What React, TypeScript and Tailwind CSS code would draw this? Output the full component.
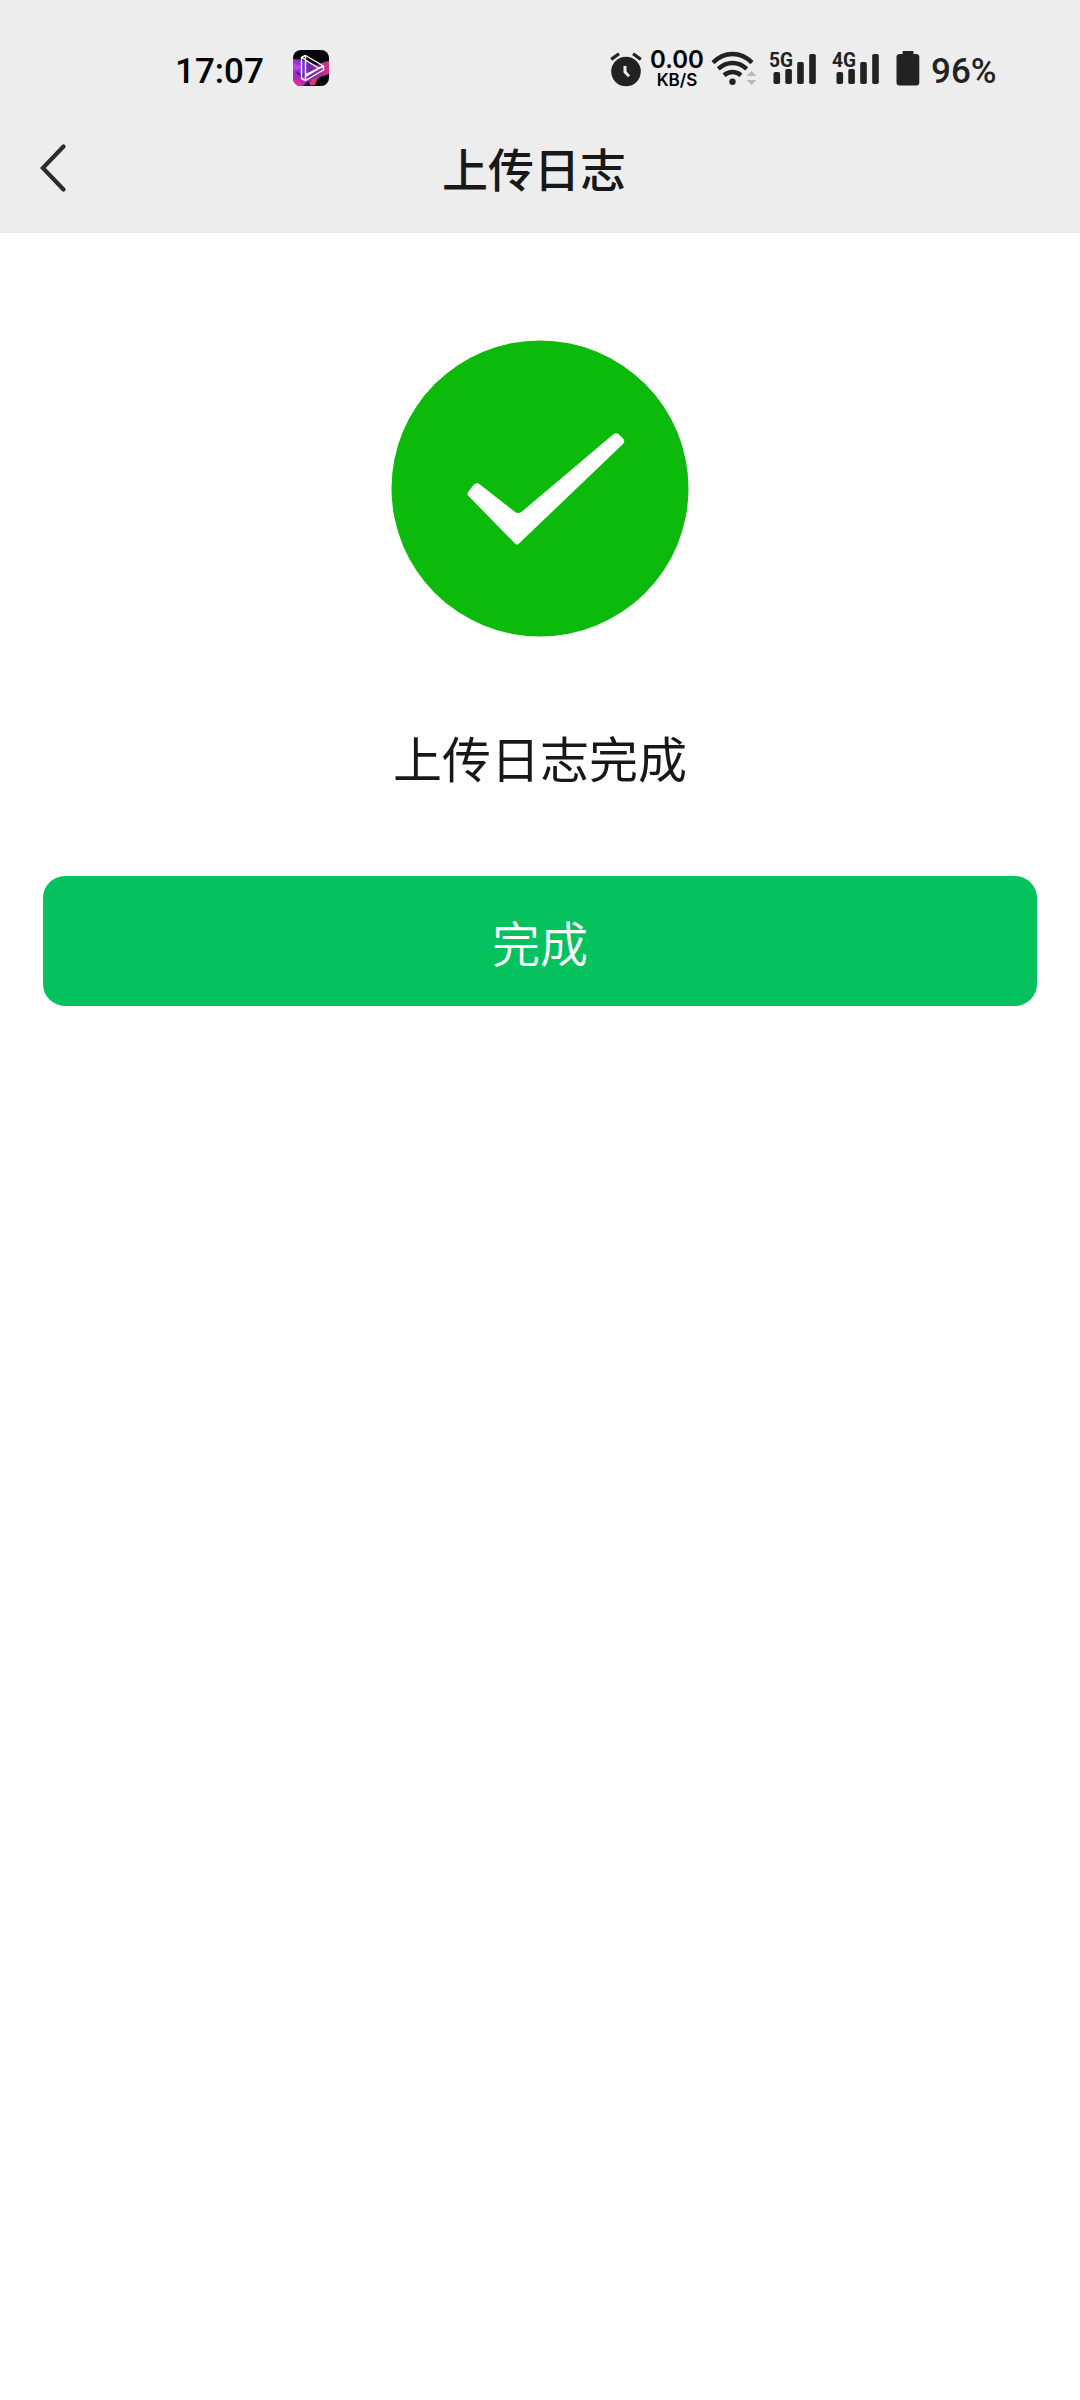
const AlarmIcon = () => (
  <svg width="35" height="38" viewBox="0 0 35 38" fill="#222">
    <circle cx="17" cy="21.500" r="14.800" />
    <path
      d="M2.200 9.400 10 3.800M31.800 9.400 24 3.800"
      stroke="#222"
      strokeWidth="3.200"
    />
    <path
      d="M16 16v6l4 4.300"
      fill="none"
      stroke="#ededed"
      strokeWidth="3"
    />
  </svg>
);

const WifiIcon = () => (
  <svg width="48" height="36" viewBox="0 0 48 36" fill="none">
    <g stroke="#222" strokeWidth="4.400">
      <path d="M3 12.600C14.500 1.200 30.500 1.200 42 12.600" />
      <path d="M8.300 18.800C17 11 28 11 36.700 18.800" />
      <path d="M14 25.200C19 21 26 21 31 25.200" />
    </g>
    <circle cx="22.500" cy="31.700" r="3.200" fill="#222" />
    <path d="M36.500 26 41.500 21 46.500 26zM36.500 30h10l-5 5z" fill="#b9b9b9" />
  </svg>
);

const SignalIcon = ({ label }: { label: string }) => (
  <svg
    width="48"
    height="36"
    viewBox="0 0 48 36"
    fill="#222"
    className="overflow-visible"
  >
    <rect x="3.500" y="22" width="6.600" height="12" rx="1.800" />
    <rect x="15.300" y="19" width="6.600" height="15" rx="1.800" />
    <rect x="27.200" y="12" width="6.600" height="22" rx="1.800" />
    <rect x="39.200" y="4" width="6.600" height="30" rx="1.800" />
    <text
      x="-1"
      y="17"
      textLength="24"
      lengthAdjust="spacingAndGlyphs"
      className="font-[Roboto] text-[21px] font-bold"
    >
      {label}
    </text>
  </svg>
);

const BatteryIcon = () => (
  <svg width="24" height="36" viewBox="0 0 24 36" fill="#222">
    <path d="M7.500 1h9q1 0 1 1v2H20q3.300 0 3.300 3v25.500q0 3-3 3H3.500q-3 0-3-3V7q0-3 3.300-3H6.500V2q0-1 1-1z" />
  </svg>
);

const AppBadge = () => (
  <svg width="36" height="36" viewBox="0 0 36 36">
    <defs>
      <clipPath id="badge">
        <rect width="36" height="36" rx="8" />
      </clipPath>
      <linearGradient id="glow" x1="0" y1="0" x2="1" y2="0">
        <stop offset="0" stopColor="#9b35e8" />
        <stop offset="0.500" stopColor="#6a2ca8" />
        <stop offset="1" stopColor="#d8357f" />
      </linearGradient>
    </defs>
    <g clipPath="url(#badge)">
      <rect width="36" height="36" fill="#08030c" />
      <path d="M0 9 9 10 24 15 31 12 36 11V24L27 27 22 31 10 36H0z" fill="url(#glow)" />
      <path d="M0 13 9 16 6 20 0 19z" fill="#c23ee8" />
      <path d="M0 22 8 25 18 29 14 36H0z" fill="#b32bb0" />
      <path d="M0 29 6 31 10 36H0z" fill="#e32b9b" />
      <path d="M2 21 12 25 8 28z" fill="#4220a0" />
      <path d="M19 29 25 27 22 35 15 36z" fill="#d83a6c" />
      <path d="M10 36 15 31 18 36z" fill="#2a0b4a" />
    </g>
    <g fill="none" stroke="#fff" strokeWidth="1.400" strokeLinejoin="round">
      <path d="M8.500 7.500 12.500 5.500 30.500 16V20L12.500 30.500 8.500 28.500z" />
      <path d="M12.500 5.500V30.500M8.500 7.500 26 18.500 12.500 26.500M30.500 16 12.500 25" />
    </g>
  </svg>
);

const StatusBar = () => (
  <div className="flex h-[134px] items-start pt-[50px] pr-[82px] pl-[175px] font-[Roboto]">
    <span className="w-[118px] pt-px text-[35px] leading-[41px] font-medium text-black">
      17:07
    </span>
    <AppBadge />
    <div className="ml-auto flex items-start">
      <AlarmIcon />
      <div className="ml-2 flex w-[50px] flex-col items-center font-[Inter] font-semibold text-black">
        <span className="text-[24px] leading-[20px]">0.00</span>
        <span className="text-[17px] leading-[20px]">KB/S</span>
      </div>
      <div className="ml-2">
        <WifiIcon />
      </div>
      <div className="ml-3">
        <SignalIcon label="5G" />
      </div>
      <div className="ml-[15px]">
        <SignalIcon label="4G" />
      </div>
      <div className="ml-[15px]">
        <BatteryIcon />
      </div>
      <span className="ml-[11px] w-[67px] pt-px text-[35px] leading-[41px] font-medium text-[#222]">
        96%
      </span>
    </div>
  </div>
);

const App = () => {
  return (
    <div className="min-h-[2400px] w-[1080px] bg-white font-['Noto_Sans_CJK_SC',sans-serif] text-[#181818]">
      <header className="h-[233px] bg-[#ededed]">
        <StatusBar />
        <div className="grid h-[66px] grid-cols-[100px_1fr_112px] items-center">
          <button className="pt-0.5 pl-10">
            <svg width="28" height="48" viewBox="0 0 28 48" fill="none">
              <path
                d="M23.500 2.500 2.800 24 23.500 45.500"
                stroke="#2b2b2b"
                strokeWidth="4.200"
                strokeLinecap="round"
              />
            </svg>
          </button>
          <h1 className="text-center text-[46px] leading-[64px] font-medium">
            上传日志
          </h1>
        </div>
      </header>

      <main className="flex flex-col items-center px-[43px] pt-[107px]">
        <svg width="298" height="297" viewBox="0 0 298 297">
          <ellipse cx="149" cy="148.500" rx="148.500" ry="148" fill="#0bba0b" />
          <path
            d="M77.500 151.500 82.500 145Q85.500 142 89 144.500L123.500 171.500Q127 174.500 131 171.500L221.500 95Q225 92 228 94.500L232 98.500Q234.500 101 232 104L128.500 203Q126 206 123.500 203L77.500 156Q75.500 153.500 77.500 151.500Z"
            fill="#fff"
          />
        </svg>
        <p className="mt-[85px] text-[49px] leading-[70px]">上传日志完成</p>
        <button className="mt-[84px] h-[130px] w-full rounded-[22px] bg-[#05c25f] text-[48px] leading-[70px] font-[350] text-white">
          完成
        </button>
      </main>
    </div>
  );
};

export default App;
